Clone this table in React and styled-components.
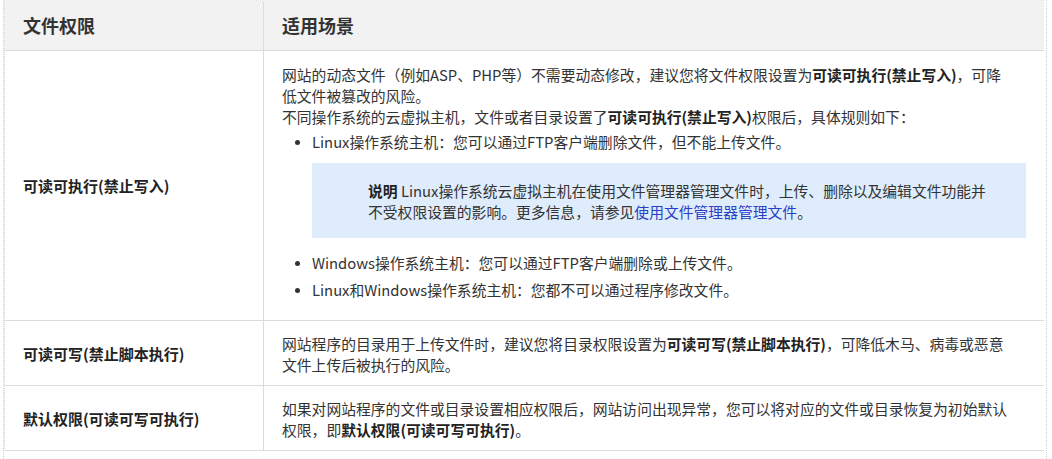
import React from "react";
import styled, { createGlobalStyle } from "styled-components";

const Global = createGlobalStyle`
  html, body { margin: 0; padding: 0; background: #fff; }
  body {
    font-family: "Noto Sans CJK SC", "Open Sans", sans-serif;
    color: #333;
    -webkit-font-smoothing: antialiased;
  }
`;

const Page = styled.div`
  width: 1052px;
  height: 459px;
  box-sizing: border-box;
  padding: 0 5px 0 3px;
  overflow: hidden;
`;

const Frame = styled.div`
  border-left: 1px dotted #cfcfcf;
  border-right: 1px dotted #cfcfcf;
  border-top: 1px dotted #e2e2e2;
  padding-bottom: 10px;
`;

const Table = styled.table`
  width: 1040px;
  border-collapse: collapse;
  table-layout: fixed;
  font-size: 14.8px;
  line-height: 21px;
`;

const Th = styled.th`
  height: 49px;
  padding: 0 18px;
  text-align: left;
  vertical-align: middle;
  background: #f2f2f2;
  font-size: 18px;
  font-weight: 700;
  color: #333;
  border-bottom: 1px solid #dcdcdc;
  border-left: ${(p) => (p.$divider ? "1px solid #dcdcdc" : "1px solid #ececec")};
`;

const Row = styled.tr`
  border-bottom: 1px solid #dcdcdc;
`;

const NameCell = styled.td`
  padding: 0 18px;
  vertical-align: middle;
  font-size: 15px;
  font-weight: 700;
  color: #222;
  border-left: 1px solid #ececec;
`;

const DescCell = styled.td`
  padding: ${(p) => p.$pad || "12px 30px 10px 18px"};
  vertical-align: top;
  border-left: 1px solid #dcdcdc;
  color: #333;
`;

const Para = styled.p`
  margin: 0;
`;

const Strong = styled.b`
  font-weight: 700;
  color: #222;
`;

const List = styled.ul`
  margin: 4px 0 6px 0;
  padding-left: 30px;
`;

const Item = styled.li`
  margin-top: ${(p) => (p.$first ? "0" : p.$gap || "6px")};
  &::marker { font-size: 13px; }
`;

const Note = styled.div`
  margin: 11px -12px 0 0;
  background: #dfecfb;
  padding: 17px 30px 16px 56px;
  color: #333;
`;

const Link = styled.a`
  color: #2a3fc8;
  text-decoration: none;
`;

export default function App() {
  return (
    <Page>
      <Global />
      <Frame>
        <Table>
          <colgroup>
            <col style={{ width: 259 }} />
            <col />
          </colgroup>
          <thead>
            <tr>
              <Th>文件权限</Th>
              <Th $divider>适用场景</Th>
            </tr>
          </thead>
          <tbody>
            <Row>
              <NameCell>可读可执行(禁止写入)</NameCell>
              <DescCell $pad="13px 30px 14px 18px">
                <Para>
                  网站的动态文件（例如ASP、PHP等）不需要动态修改，建议您将文件权限设置为
                  <Strong>可读可执行(禁止写入)</Strong>，可降低文件被篡改的风险。
                </Para>
                <Para>
                  不同操作系统的云虚拟主机，文件或者目录设置了
                  <Strong>可读可执行(禁止写入)</Strong>权限后，具体规则如下：
                </Para>
                <List>
                  <Item $first>
                    Linux操作系统主机：您可以通过FTP客户端删除文件，但不能上传文件。
                    <Note>
                      <Strong>说明</Strong> Linux操作系统云虚拟主机在使用文件管理器管理文件时，上传、删除以及编辑文件功能并不受权限设置的影响。更多信息，请参见
                      <Link href="#">使用文件管理器管理文件</Link>。
                    </Note>
                  </Item>
                  <Item $gap="14px">Windows操作系统主机：您可以通过FTP客户端删除或上传文件。</Item>
                  <Item>Linux和Windows操作系统主机：您都不可以通过程序修改文件。</Item>
                </List>
              </DescCell>
            </Row>
            <Row>
              <NameCell>可读可写(禁止脚本执行)</NameCell>
              <DescCell>
                <Para>
                  网站程序的目录用于上传文件时，建议您将目录权限设置为
                  <Strong>可读可写(禁止脚本执行)</Strong>，可降低木马、病毒或恶意文件上传后被执行的风险。
                </Para>
              </DescCell>
            </Row>
            <Row>
              <NameCell>默认权限(可读可写可执行)</NameCell>
              <DescCell>
                <Para>
                  如果对网站程序的文件或目录设置相应权限后，网站访问出现异常，您可以将对应的文件或目录恢复为初始默认权限，即
                  <Strong>默认权限(可读可写可执行)</Strong>。
                </Para>
              </DescCell>
            </Row>
          </tbody>
        </Table>
      </Frame>
    </Page>
  );
}
